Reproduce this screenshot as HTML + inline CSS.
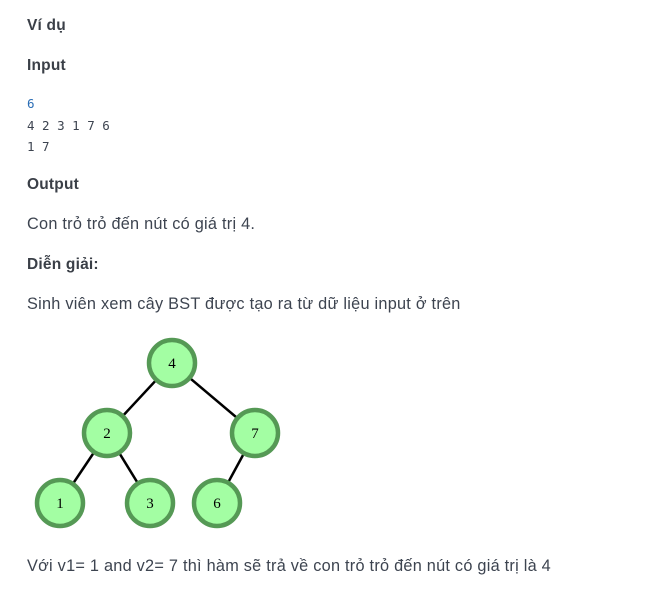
<!DOCTYPE html>
<html><head><meta charset="utf-8"><style>
body{margin:0;background:#fff;width:668px;height:610px;position:relative;font-family:"Liberation Sans",sans-serif;color:#333a44}
.t{position:absolute;left:27px;white-space:nowrap}
.b{font-weight:bold;font-size:15.5px;color:#3a3f47;letter-spacing:0.2px}
.p{font-size:16.3px;color:#3d4450;letter-spacing:0.25px}
.c{font-family:"DejaVu Sans Mono","Liberation Mono",monospace;font-size:12.5px;color:#3d4450}
</style></head><body>
<div class="t b" style="top:17px">Ví dụ</div>
<div class="t b" style="top:57px">Input</div>
<div class="t c" style="top:96px;color:#2a6db5">6</div>
<div class="t c" style="top:118px">4 2 3 1 7 6</div>
<div class="t c" style="top:139px">1 7</div>
<div class="t b" style="top:176px">Output</div>
<div class="t p" style="top:215px">Con trỏ trỏ đến nút có giá trị 4.</div>
<div class="t b" style="top:256px">Diễn giải:</div>
<div class="t p" style="top:295px">Sinh viên xem cây BST được tạo ra từ dữ liệu input ở trên</div>
<svg style="position:absolute;left:0;top:0" width="668" height="610">
<g stroke="#000" stroke-width="2.5">
<line x1="172" y1="363" x2="107" y2="433"/><line x1="172" y1="363" x2="255" y2="433"/>
<line x1="107" y1="433" x2="60" y2="503"/><line x1="107" y1="433" x2="150" y2="503"/>
<line x1="255" y1="433" x2="217" y2="503"/></g>
<g fill="#a3fea3" stroke="#559955" stroke-width="4.5">
<circle cx="172" cy="363" r="23"/><circle cx="107" cy="433" r="23"/><circle cx="255" cy="433" r="23"/>
<circle cx="60" cy="503" r="23"/><circle cx="150" cy="503" r="23"/><circle cx="217" cy="503" r="23"/></g>
<g font-family="Liberation Serif,serif" font-size="15" text-anchor="middle" fill="#000">
<text x="172" y="368">4</text><text x="107" y="438">2</text><text x="255" y="438">7</text>
<text x="60" y="508">1</text><text x="150" y="508">3</text><text x="217" y="508">6</text></g>
</svg>
<div class="t p" style="top:557px">Với v1= 1 and v2= 7 thì hàm sẽ trả về con trỏ trỏ đến nút có giá trị là 4</div>
</body></html>
